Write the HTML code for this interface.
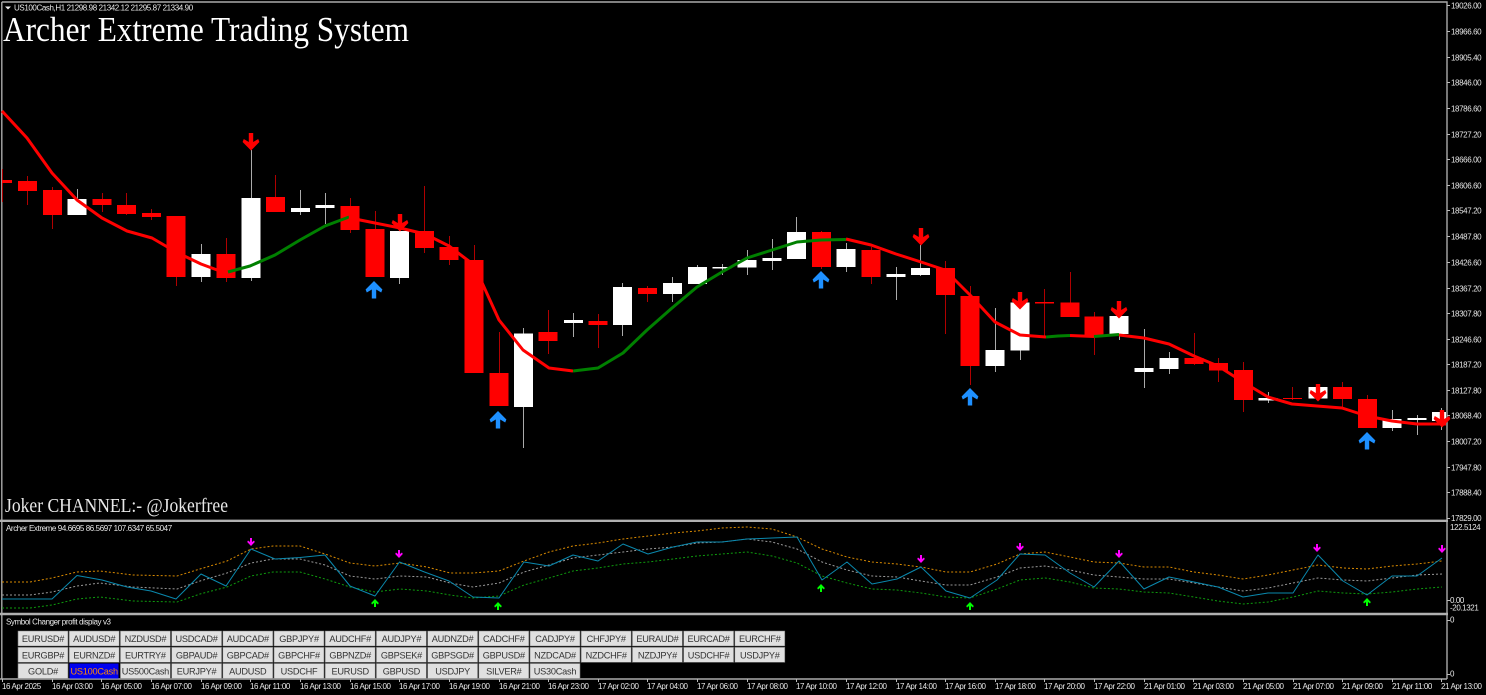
<!DOCTYPE html>
<html><head><meta charset="utf-8"><style>
html,body{margin:0;padding:0;background:#000;width:1486px;height:695px;overflow:hidden}
svg{display:block;position:absolute;left:0;top:0;filter:blur(.3px)}
text{font-family:"Liberation Sans",sans-serif}
.s{font-size:8px;letter-spacing:-.4px;fill:#e8e8e8}
.b{font-size:9.200px;letter-spacing:-.25px;fill:#333;text-anchor:middle}
.w{fill:none;stroke-width:1}
.d{fill:none;stroke-width:1;stroke-dasharray:2 2}
.l{fill:none;stroke-width:3;stroke-linejoin:round}
</style></head><body>
<svg width="1486" height="695" viewBox="0 0 1486 695" xmlns="http://www.w3.org/2000/svg">
<defs>
<path id="dn" d="M-2.2 0h4.4v9l5-3 1.2 3L0 17.5-8.400 9l1.200-3 5 3z"/>
<path id="up" d="M-2.200 17.500h4.400v-9l5 3 1.200-3L0 0-8.400 8.500l1.200 3 5-3z"/>
<path id="sd" d="M-1 0h2v4l2-1.500 .8 1.500L0 8-3.800 4l.8-1.500 2 1.500z"/>
<path id="su" d="M-1 8h2V4l2 1.500 .8-1.500L0 0-3.800 4l.8 1.500 2-1.500z"/>
</defs>
<rect width="1486" height="695" fill="#000"/>
<!-- frame -->
<path d="M1.800 2H1447V679M1.800 2V679M0 679H1447" fill="none" stroke="#aaa" stroke-width="1.400"/>
<path d="M0 520.800H1448M0 614H1448" stroke="#b0b0b0" stroke-width="2.400" fill="none"/>
<!-- wicks -->
<path class="w" stroke="#b00000" d="M2.500 169V202M27.500 176V205M52.500 187V229M102.500 193V212M126.500 193V215M151.500 209V220M176.500 216V286M226.500 238V282M275.500 175V212M350.500 198V233M375.500 211V277M424.500 186V253M449.500 236V265M474.500 245V373M499.500 332V406M548.500 310V354M598.500 314V348M647.500 286V302M821.500 231V269M871.500 247V284M945.500 261V334M970.500 286V385M1044.500 289V338M1070.500 272V317M1094.500 312V355M1194.500 333V365M1218.500 358V382M1243.500 362V412M1292.500 387V400M1342.500 382V407M1367.500 395V428"/>
<path class="w" stroke="#aaa" d="M77.500 189V215M201.500 244V282M251.500 150V281M300.500 190V215M325.500 193V224M399.500 215V284M523.500 328V448M573.500 313V337M622.500 283V336M672.500 277V302M697.500 265V284M722.500 264V275M747.500 250V275M772.500 239V270M796.500 217V259M846.500 243V272M896.500 267V300M920.500 245V276M995.500 308V372M1020.500 300V360M1119.500 312V340M1144.500 329V388M1169.500 352V374M1268.500 392V403M1318.500 385V400M1392.500 410V431M1417.500 415V435M1441.500 408V430"/>
<!-- bodies -->
<path fill="#f00" d="M2 180h10v3H2zM18 181h19v10H18zM43 190h19v25H43zM92.500 199h19v6h-19zM117 205h19v9h-19zM142 213h19v4h-19zM166.500 216h19v61h-19zM216.500 254h19v24h-19zM266 197h19v15h-19zM340.500 206h19v24h-19zM365.500 229h19v48h-19zM415 231h19v17h-19zM439.500 247h19v13h-19zM464.500 260h19v113h-19zM489.500 373h19v33h-19zM538.500 332h19v9h-19zM588.500 321h19v4h-19zM638 288h19v6h-19zM812 232h19v35h-19zM861.500 250h19v27h-19zM936 268h19v27h-19zM960.500 296h19v70h-19zM1035 302h19v1.500h-19zM1060.500 302.500h19v14.500h-19zM1084.500 316.500h19v20.500h-19zM1184.500 358h19v6h-19zM1209 363h19v7.500h-19zM1234 370h19v30h-19zM1283 398h19v1h-19zM1333 387h19v12h-19zM1358 399h19v29h-19z"/>
<path fill="#fff" d="M67.500 199h19v16h-19zM191.500 254h19v23h-19zM241.500 198h19v80h-19zM291 208h19v4h-19zM315.500 205h19v3h-19zM390 231h19v47h-19zM514 333.500h19v73.500h-19zM564 320h19v3h-19zM613 287h19v38h-19zM663 283h19v11h-19zM688 267h19v17h-19zM712.500 267h19v1.500h-19zM737.500 260h19v7.500h-19zM762.500 258h19v3h-19zM787 232h19v27h-19zM836.500 249h19v18h-19zM886.500 274h19v3h-19zM911 268h19v7h-19zM985.500 350h19v16h-19zM1010.500 302.500h19v48h-19zM1109.500 316h19v18h-19zM1134.500 368h19v4h-19zM1159.500 358h19v11h-19zM1258.500 398h19v2.500h-19zM1308.500 387h19v11.500h-19zM1382.500 419h19v9h-19zM1407.500 418h19v2h-19zM1432 412h14v9h-14z"/>
<!-- MA lines -->
<polyline class="l" stroke="#f00" points="2,111 27,138 52,173 77,200 102,218 127,231 152,238 176,252 201,264 228,274"/>
<polyline class="l" stroke="#008000" points="228,272 250,266 275,255 300,240 325,226 349,217"/>
<polyline class="l" stroke="#f00" points="349,217 360,220 375,223 400,228 425,234 449,246 474,265 499,320 523,350 549,368 573,371"/>
<polyline class="l" stroke="#008000" points="573,371 598,368 623,353 647,330 672,308 697,287 722,272 747,258 772,250 797,242 821,240 846,239.500"/>
<polyline class="l" stroke="#f00" points="846,239 871,245 896,254 921,262 945,270 970,295 995,322 1020,335 1046,337"/>
<polyline class="l" stroke="#008000" points="1046,337 1058,336 1070,335.500"/>
<polyline class="l" stroke="#f00" points="1070,335.500 1094,336.500"/>
<polyline class="l" stroke="#008000" points="1094,336.500 1119,334.500"/>
<polyline class="l" stroke="#f00" points="1119,335 1144,338 1169,344 1194,356 1218,366 1243,382 1268,397 1292,404 1317,406 1342,408 1367,416 1392,421 1417,424 1446,424"/>
<!-- arrows -->
<g fill="#f00"><use href="#dn" x="251" y="133"/><use href="#dn" x="400" y="214"/><use href="#dn" x="921" y="228"/><use href="#dn" x="1020" y="292"/><use href="#dn" x="1119" y="301"/><use href="#dn" x="1318" y="384"/><use href="#dn" x="1442" y="410"/></g>
<g fill="#1e90ff"><use href="#up" x="374" y="281"/><use href="#up" x="498" y="411"/><use href="#up" x="821" y="271"/><use href="#up" x="970" y="388"/><use href="#up" x="1367" y="432"/></g>
<!-- titles -->
<path d="M5 6.500h6l-3 3z" fill="#eee"/>
<text class="s" x="14" y="10.500">US100Cash,H1  21298.98 21342.12 21295.87 21334.90</text>
<text x="3" y="41" textLength="406" lengthAdjust="spacingAndGlyphs" style="font-family:'Liberation Serif',serif;font-size:35px;fill:#fff">Archer Extreme Trading System</text>
<text x="5" y="512" textLength="223" lengthAdjust="spacingAndGlyphs" style="font-family:'Liberation Serif',serif;font-size:19.500px;fill:#e8e8e8">Joker CHANNEL:- @Jokerfree</text>
<!-- indicator -->
<polyline class="d" stroke="#d98a00" points="2,582 30,582 52,578 77,572 100,571 133,575 177,576 200,569 227,561 251,549 273,546 300,546 325,554 350,563 375,566 400,563 427,567 450,573 473,573 499,571 524,561 549,552 573,546 598,543 623,539 648,536 673,533 697,531 722,528 747,527 772,529 797,537 822,549 847,557 872,562 897,564 921,567 946,572 970,572 997,564 1020,554 1045,552 1070,557 1094,562 1119,563 1144,567 1169,567 1194,572 1218,575 1243,579 1268,575 1293,570 1318,565 1343,568 1367,569 1392,566 1417,564 1442,561"/>
<polyline class="d" stroke="#999" points="2,595 30,595 52,592 77,586 100,583 133,587 177,589 200,581 227,573 251,563 273,559 300,559 325,565 350,576 375,579 400,576 427,577 450,583 473,587 499,583 524,572 549,565 573,558 598,555 623,552 648,549 673,547 697,543 722,542 747,539 772,542 797,549 822,562 847,570 872,576 897,577 921,581 946,585 970,585 997,577 1020,568 1045,566 1070,570 1094,575 1119,577 1144,579 1169,579 1194,583 1218,587 1243,591 1268,588 1293,583 1318,578 1343,580 1367,581 1392,578 1417,575 1442,574"/>
<polyline class="d" stroke="#0e9a0e" points="2,608 30,608 52,605 77,599 100,597 133,601 177,602 200,594 227,587 251,576 273,572 300,572 325,579 350,587 375,592 400,589 427,591 450,595 473,598 499,596 524,585 549,578 573,571 598,568 623,564 648,562 673,559 697,556 722,554 747,552 772,556 797,563 822,576 847,583 872,589 897,590 921,593 946,597 970,598 997,589 1020,580 1045,578 1070,582 1094,588 1119,589 1144,592 1169,593 1194,597 1218,601 1243,604 1268,602 1293,597 1318,591 1343,593 1367,594 1392,592 1417,589 1442,587"/>
<polyline class="w" stroke="#0a88ad" stroke-linejoin="round" points="2,599 52,599 77,575.500 102,580 127,587 151,591 176,599 201,574 226,586 251,549 275,559 300,557.500 325,555 350,586 375,596 399.500,562 424.500,572 449,581 473,597 499,598 524,562 549,566 573,555 598,561 623,544 648,554 673,547 697,542 722,542 747,539 772,538 797,537 822,580 847,562 872,584 897,579 921,567 946,591 970,598 997,580 1020,554 1045,555 1070,573 1094,587 1119,561 1144,589 1169,577 1194,582 1218,587 1243,597 1268,593 1293,593 1318,555 1343,581 1367,595 1392,576 1417,576 1442,558"/>
<g fill="#f0f"><use href="#sd" x="251" y="538"/><use href="#sd" x="399" y="550"/><use href="#sd" x="921" y="555"/><use href="#sd" x="1020" y="543"/><use href="#sd" x="1119" y="550"/><use href="#sd" x="1317" y="544"/><use href="#sd" x="1442" y="545"/></g>
<g fill="#0f0"><use href="#su" x="375" y="599"/><use href="#su" x="498" y="602"/><use href="#su" x="821" y="584"/><use href="#su" x="970" y="602"/><use href="#su" x="1367" y="598"/></g>
<text class="s" x="6" y="531">Archer Extreme 94.6695 86.5697 107.6347 65.5047</text>
<text class="s" x="6" y="624.500">Symbol Changer profit display v3</text>
<!-- buttons -->
<g fill="#e0e0e0" stroke="#777" stroke-width=".6">
<path d="M18 631h50v15H18zM69.200 631h50v15h-50zM120.400 631h50v15h-50zM171.600 631h50v15h-50zM222.800 631h50v15h-50zM274 631h50v15h-50zM325.200 631h50v15h-50zM376.400 631h50v15h-50zM427.600 631h50v15h-50zM478.800 631h50v15h-50zM530 631h50v15h-50zM581.200 631h50v15h-50zM632.400 631h50v15h-50zM683.600 631h50v15h-50zM734.800 631h50v15h-50z"/>
<path d="M18 647.300h50v15H18zM69.200 647.300h50v15h-50zM120.400 647.300h50v15h-50zM171.600 647.300h50v15h-50zM222.800 647.300h50v15h-50zM274 647.300h50v15h-50zM325.200 647.300h50v15h-50zM376.400 647.300h50v15h-50zM427.600 647.300h50v15h-50zM478.800 647.300h50v15h-50zM530 647.300h50v15h-50zM581.200 647.300h50v15h-50zM632.400 647.300h50v15h-50zM683.600 647.300h50v15h-50zM734.800 647.300h50v15h-50z"/>
<path d="M18 663.500h50v15H18zM120.400 663.500h50v15h-50zM171.600 663.500h50v15h-50zM222.800 663.500h50v15h-50zM274 663.500h50v15h-50zM325.200 663.500h50v15h-50zM376.400 663.500h50v15h-50zM427.600 663.500h50v15h-50zM478.800 663.500h50v15h-50zM530 663.500h50v15h-50z"/>
</g>
<rect x="69.500" y="663.500" width="49" height="15" fill="#0000f0"/>
<g>
<text class="b" x="43" y="642">EURUSD#</text><text class="b" x="94.200" y="642">AUDUSD#</text><text class="b" x="145.400" y="642">NZDUSD#</text><text class="b" x="196.600" y="642">USDCAD#</text><text class="b" x="247.800" y="642">AUDCAD#</text><text class="b" x="299" y="642">GBPJPY#</text><text class="b" x="350.200" y="642">AUDCHF#</text><text class="b" x="401.400" y="642">AUDJPY#</text><text class="b" x="452.600" y="642">AUDNZD#</text><text class="b" x="503.800" y="642">CADCHF#</text><text class="b" x="555" y="642">CADJPY#</text><text class="b" x="606.200" y="642">CHFJPY#</text><text class="b" x="657.400" y="642">EURAUD#</text><text class="b" x="708.600" y="642">EURCAD#</text><text class="b" x="759.800" y="642">EURCHF#</text>
<text class="b" x="43" y="658.300">EURGBP#</text><text class="b" x="94.200" y="658.300">EURNZD#</text><text class="b" x="145.400" y="658.300">EURTRY#</text><text class="b" x="196.600" y="658.300">GBPAUD#</text><text class="b" x="247.800" y="658.300">GBPCAD#</text><text class="b" x="299" y="658.300">GBPCHF#</text><text class="b" x="350.200" y="658.300">GBPNZD#</text><text class="b" x="401.400" y="658.300">GBPSEK#</text><text class="b" x="452.600" y="658.300">GBPSGD#</text><text class="b" x="503.800" y="658.300">GBPUSD#</text><text class="b" x="555" y="658.300">NZDCAD#</text><text class="b" x="606.200" y="658.300">NZDCHF#</text><text class="b" x="657.400" y="658.300">NZDJPY#</text><text class="b" x="708.600" y="658.300">USDCHF#</text><text class="b" x="759.800" y="658.300">USDJPY#</text>
<text class="b" x="43" y="674.500">GOLD#</text><text class="b" x="94.200" y="674.500" style="fill:#ff8c00">US100Cash</text><text class="b" x="145.400" y="674.500">US500Cash</text><text class="b" x="196.600" y="674.500">EURJPY#</text><text class="b" x="247.800" y="674.500">AUDUSD</text><text class="b" x="299" y="674.500">USDCHF</text><text class="b" x="350.200" y="674.500">EURUSD</text><text class="b" x="401.400" y="674.500">GBPUSD</text><text class="b" x="452.600" y="674.500">USDJPY</text><text class="b" x="503.800" y="674.500">SILVER#</text><text class="b" x="555" y="674.500">US30Cash</text>
</g>
<!-- price axis -->
<path class="w" stroke="#bbb" d="M1447 5.500h3M1447 31.500h3M1447 57.500h3M1447 82.500h3M1447 108.500h3M1447 134.500h3M1447 159.500h3M1447 185.500h3M1447 210.500h3M1447 236.500h3M1447 262.500h3M1447 288.500h3M1447 313.500h3M1447 339.500h3M1447 364.500h3M1447 390.500h3M1447 415.500h3M1447 441.500h3M1447 467.500h3M1447 492.500h3M1447 518.500h3M1447 600.500h3M1447 620.500h3M1447 674.500h3"/>
<g>
<text class="s" x="1451" y="8.500">19026.00</text><text class="s" x="1451" y="34.500">18966.60</text><text class="s" x="1451" y="60.500">18905.40</text><text class="s" x="1451" y="85.500">18846.00</text><text class="s" x="1451" y="111.500">18786.60</text><text class="s" x="1451" y="137.500">18727.20</text><text class="s" x="1451" y="162.500">18666.00</text><text class="s" x="1451" y="188.500">18606.60</text><text class="s" x="1451" y="213.500">18547.20</text><text class="s" x="1451" y="239.500">18487.80</text><text class="s" x="1451" y="265.500">18426.60</text><text class="s" x="1451" y="291.500">18367.20</text><text class="s" x="1451" y="316.500">18307.80</text><text class="s" x="1451" y="342.500">18246.60</text><text class="s" x="1451" y="367.500">18187.20</text><text class="s" x="1451" y="393.500">18127.80</text><text class="s" x="1451" y="418.500">18068.40</text><text class="s" x="1451" y="444.500">18007.20</text><text class="s" x="1451" y="470.500">17947.80</text><text class="s" x="1451" y="495.500">17888.40</text><text class="s" x="1451" y="521">17829.00</text>
<text class="s" x="1450" y="530">122.5124</text><text class="s" x="1450" y="603">0.00</text><text class="s" x="1450" y="610.500">-20.1321</text><text class="s" x="1450" y="622.500">0</text><text class="s" x="1450" y="676.500">0</text>
</g>
<!-- time axis -->
<path class="w" stroke="#bbb" d="M2.500 679v3M52.500 679v3M101.500 679v3M151.500 679v3M201.500 679v3M250.500 679v3M300.500 679v3M350.500 679v3M399.500 679v3M449.500 679v3M499.500 679v3M548.500 679v3M598.500 679v3M647.500 679v3M697.500 679v3M747.500 679v3M796.500 679v3M846.500 679v3M896.500 679v3M945.500 679v3M995.500 679v3M1044.500 679v3M1094.500 679v3M1144.500 679v3M1193.500 679v3M1243.500 679v3M1293.500 679v3M1342.500 679v3M1392.500 679v3M1441.500 679v3"/>
<g>
<text class="s" x="2" y="689">16 Apr 2025</text><text class="s" x="52" y="689">16 Apr 03:00</text><text class="s" x="101" y="689">16 Apr 05:00</text><text class="s" x="151" y="689">16 Apr 07:00</text><text class="s" x="201" y="689">16 Apr 09:00</text><text class="s" x="250" y="689">16 Apr 11:00</text><text class="s" x="300" y="689">16 Apr 13:00</text><text class="s" x="350" y="689">16 Apr 15:00</text><text class="s" x="399" y="689">16 Apr 17:00</text><text class="s" x="449" y="689">16 Apr 19:00</text><text class="s" x="499" y="689">16 Apr 21:00</text><text class="s" x="548" y="689">16 Apr 23:00</text><text class="s" x="598" y="689">17 Apr 02:00</text><text class="s" x="647" y="689">17 Apr 04:00</text><text class="s" x="697" y="689">17 Apr 06:00</text><text class="s" x="747" y="689">17 Apr 08:00</text><text class="s" x="796" y="689">17 Apr 10:00</text><text class="s" x="846" y="689">17 Apr 12:00</text><text class="s" x="896" y="689">17 Apr 14:00</text><text class="s" x="945" y="689">17 Apr 16:00</text><text class="s" x="995" y="689">17 Apr 18:00</text><text class="s" x="1044" y="689">17 Apr 20:00</text><text class="s" x="1094" y="689">17 Apr 22:00</text><text class="s" x="1144" y="689">21 Apr 01:00</text><text class="s" x="1193" y="689">21 Apr 03:00</text><text class="s" x="1243" y="689">21 Apr 05:00</text><text class="s" x="1293" y="689">21 Apr 07:00</text><text class="s" x="1342" y="689">21 Apr 09:00</text><text class="s" x="1392" y="689">21 Apr 11:00</text><text class="s" x="1441" y="689">21 Apr 13:00</text>
</g>
</svg>
</body></html>
